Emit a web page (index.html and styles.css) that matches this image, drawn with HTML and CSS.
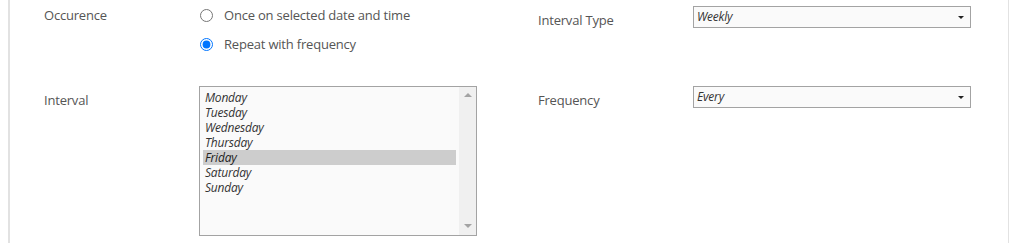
FILE: index.html
```html
<!DOCTYPE html>
<html>
<head>
<meta charset="utf-8">
<link rel="stylesheet" href="styles.css">
</head>
<body>
<div class="panel">
  <div class="form">
    <div class="label">Occurence</div>
    <div class="radios">
      <label class="opt"><input type="radio" name="occ"><span>Once on selected date and time</span></label>
      <label class="opt"><input type="radio" name="occ" checked><span>Repeat with frequency</span></label>
    </div>
    <div class="label label-shift">Interval Type</div>
    <div class="select"><span class="val">Weekly</span><span class="caret"></span></div>

    <div class="label label-shift">Interval</div>
    <div class="listbox">
      <div class="items">
        <div class="item">Monday</div>
        <div class="item">Tuesday</div>
        <div class="item">Wednesday</div>
        <div class="item">Thursday</div>
        <div class="item sel">Friday</div>
        <div class="item">Saturday</div>
        <div class="item">Sunday</div>
      </div>
      <div class="scroll"><span class="up"></span><span class="down"></span></div>
    </div>
    <div class="label label-shift">Frequency</div>
    <div class="select"><span class="val">Every</span><span class="caret"></span></div>
  </div>
</div>
</body>
</html>
```
FILE: styles.css
```css
html, body {
  margin: 0;
  padding: 0;
  background: #fff;
}
body {
  font-family: "Open Sans", "Noto Sans", sans-serif;
  font-size: 13px;
  letter-spacing: -0.2px;
  color: #555;
}
.panel {
  margin-left: 8px;
  width: 998px;
  height: 243px;
  border-left: 2px solid #e2e2e2;
  border-right: 1px solid #e2e2e2;
  box-sizing: content-box;
}
.form {
  display: grid;
  grid-template-columns: 155px 339px 155px 278px;
  grid-template-rows: 80px auto;
  padding: 6px 0 0 34px;
  align-items: start;
}
.label {
  line-height: 18px;
  margin-top: 0;
}
.label-shift {
  margin-top: 5px;
}
.radios {
  display: flex;
  flex-direction: column;
  gap: 11px;
}
.opt {
  display: flex;
  align-items: center;
  line-height: 18px;
  gap: 11px;
}
.opt input {
  margin: 0 0 0 1px;
  width: 13px;
  height: 13px;
}
.select {
  width: 278px;
  height: 22px;
  box-sizing: border-box;
  border: 1px solid #a3a3a3;
  background: #fafafa;
  display: flex;
  align-items: center;
  justify-content: space-between;
  padding: 0 6px 1px 3px;
  font-style: italic;
  font-size: 12px;
  color: #333;
}
.caret {
  width: 0;
  height: 0;
  border-left: 3px solid transparent;
  border-right: 3px solid transparent;
  border-top: 3px solid #222;
  margin-top: 2px;
}
.listbox {
  width: 278px;
  height: 150px;
  box-sizing: border-box;
  border: 1px solid #a3a3a3;
  background: #fafafa;
  display: flex;
}
.items {
  flex: 1;
  padding: 3px 3px 0 3px;
}
.item {
  height: 15px;
  line-height: 15px;
  padding-left: 2px;
  font-style: italic;
  font-size: 12px;
  color: #333;
}
.item.sel {
  background: #cdcdcd;
  color: #222;
}
.scroll {
  width: 17px;
  background: #f0f0f0;
  display: flex;
  flex-direction: column;
  justify-content: space-between;
  align-items: center;
  padding: 6px 0 7px;
}
.up, .down {
  width: 0;
  height: 0;
  border-left: 4px solid transparent;
  border-right: 4px solid transparent;
}
.up {
  border-bottom: 4px solid #a3a3a3;
}
.down {
  border-top: 4px solid #a3a3a3;
}
```
